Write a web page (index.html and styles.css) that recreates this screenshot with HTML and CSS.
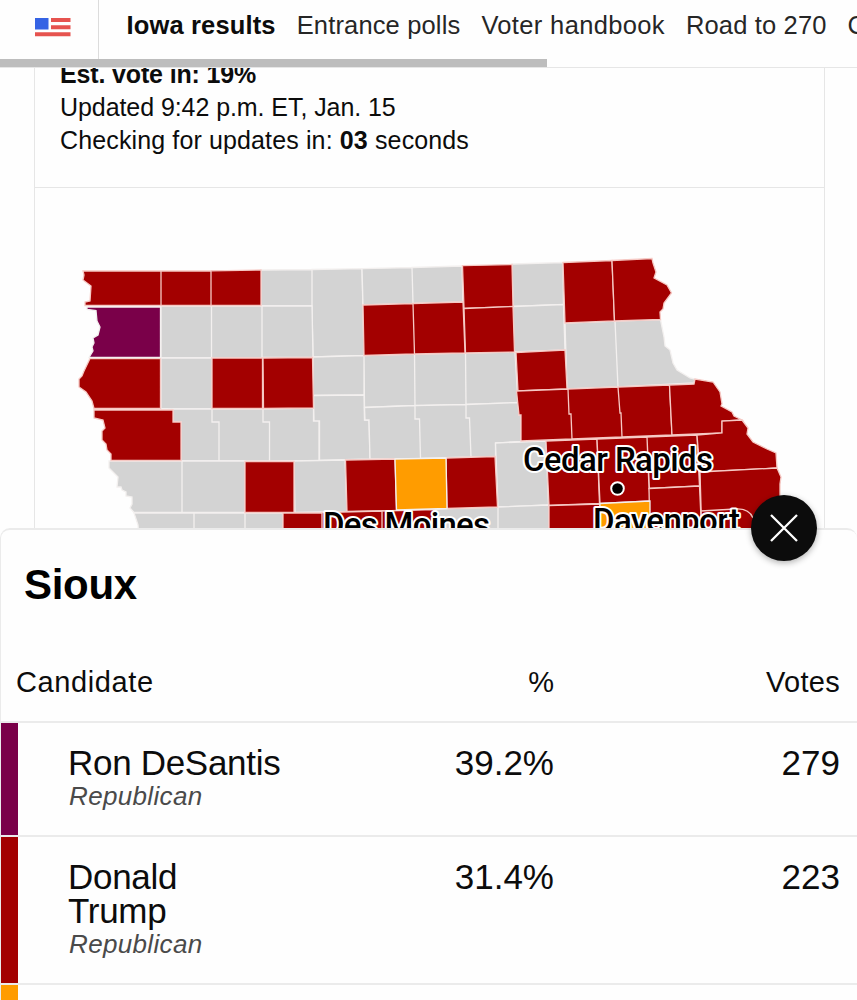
FILE: index.html
```
<!DOCTYPE html>
<html lang="en">
<head>
    <meta charset="utf-8">
    <title>Iowa results</title>
    <link rel="stylesheet" href="styles.css">
</head>
<body>
    <header class="topbar">
        <a class="flag" href="#">
            <svg width="36" height="19" viewBox="0 0 36 19">
                <rect width="13.5" height="11.5" fill="#3563e4"/>
                <path d="M16 0h19.5v4H16zM16 7.3h19.5v4H16zM0 14.3h35.5v4H0z" fill="#e6534f"/>
            </svg>
        </a>
        <nav class="nav">
            <a class="active" href="#">Iowa results</a>
            <a class="polls" href="#">Entrance polls</a>
            <a class="handbook" href="#">Voter handbook</a>
            <a class="road" href="#">Road to 270</a>
            <a href="#">C</a>
        </nav>
        <div class="scroll-thumb"></div>
    </header>

    <main class="card">
        <div class="status">
            <p class="est">Est. vote in: 19%</p>
            <p class="updated">Updated 9:42 p.m. ET, Jan. 15</p>
            <p class="checking">Checking for updates in: <b>03</b> seconds</p>
        </div>
        <svg class="map" width="789" height="340" viewBox="35 188 789 340">
            <!-- no results yet -->
            <g class="none">
                <path d="M261 270L312 269.5V306H261zM312 269.5L362 268.7L364 355.5L313 357L312 306z"/>
                <path d="M362 268.7L412 267.5L413 303.5L363 305zM412 267.5L462 266L463 302L413 303.5zM512 264L563 262.5L563.500 304.500L513 306.500z"/>
                <path d="M161 306H211.500V358H161zM211.500 306H262V358H211.500zM262 306H312L313 357.500H262zM513 306.500L563.500 304.500L565 350L514 352z"/>
                <path d="M565 323L615 321L618 387L567 389zM615 321L660.500 319.500L664 337L665 346L670 350L673 363L677 370L690 378L695 379L694 383L618 387z"/>
                <path d="M161 358H212V409H173L161 408.500zM313 357L364 355.500V395L313 395.500zM364 355.500L414.500 354L415 405.500L364.500 407.500zM414.500 354L465.500 353L466 404.500L415 406zM465.500 353L515 352L518 402.500L466 404.500z"/>
                <path d="M173 409H212V422H219V461H181V422H173zM212 409H263V422H269.500V461H219V422H212zM263 409L313.500 408V421H319V460.500L269.500 461V422H263zM313.500 395.500L364 395L364.500 420H369L370 459L319.500 460.500V421H314z"/>
                <path d="M364.500 407.500L415 405.500V419H419.500L420.500 458.500L370 459L369 420H365zM415 405.500L466 404.500V418H469.500L471 457L420.500 458.500L419.500 419H415zM466 404.500L518 402.500L519 415H521V441.500L495.500 443V456.500L471 457L469.500 418H466z"/>
                <path d="M109 461H182V512.500H134L130 508L132 504V497L126 496V492L122 490L121 487H117L118 477L109 468zM182 461H245V512.500H182zM294 461L345 460L347 511.500L295 512.500zM495.500 443L546 441L548.500 505L498 507z"/>
                <path d="M134 513H194V540H139L138 525zM194 513H245V540H194zM245 513H283V540H245zM434 509L498 507V540H434zM498 507L549 505V540H498z"/>
            </g>
            <g class="trump">
                <path d="M83 271H161V305.500H85V302L90 301L91 286L83 280L84 275zM161 271H211V305.500H161zM211 270.800L261 270V305.500H211z"/>
                <path d="M462.500 265.700L512 264.500L513 306.500L464 308.500zM563 262.500L612 260.500L614.500 321L565 323z"/>
                <path d="M612 260.500L652 258.500L653 263L656 272L654 278L667 285L671.500 293L664 303L663 309L660 312L660.500 319.500L614.500 321z"/>
                <path d="M363 305L413 303.500L414.500 354L364 355.500zM413 303.500L463 302L465 353L414.500 354zM464 308.500L513 306.500L514.500 352L465.500 353zM516 352.500L565 350L567 389L518 391z"/>
                <path d="M90 358.500H160.500V408.500H94L92 401L86 392L79 387V379L82 376L84 371zM212 358H262.500V408.500H212zM263 358L312.500 357.500L313.500 408L263.500 408.500z"/>
                <path d="M94 410H173V422H181V460.500H111V454L107 450L106 444L102 440V431L105 428L103 420L94 418z"/>
                <path d="M516.500 391L568 389L569 414H571L572 439L521 441V415H519zM568 389L618 387L620 413H621L622 437L572 439L571 414H569zM618 387L669.500 385L672 435L622 437L621 413H620z"/>
                <path d="M669.500 385L694 384L695 379L713 382L720 392L722 404L721 406L732 412L734 416L742 420L722 421V433L672 435z"/>
                <path d="M245 461.500H294V512.500H245zM345.500 460L395 459L396.500 510.500L347 511.500zM446 458L495 456.500L497.500 507L447 508.500zM546 441L597 439L599.500 503.500L549 505.500z"/>
                <path d="M597 439L647 437L650 501L600 503.500zM647 437L697 435L699.500 486L649 488.500z"/>
                <path d="M697 435L722 433V421L742 420L748 428L747 434L753 442L767 449L776 453L777 468L700 472z"/>
                <path d="M700 472L777 468L781 477L780 484V500L770 540H702zM649 488.500L699.500 486L702 540H650z"/>
                <path d="M283 513H322V540H283zM322 512.500L382 511V540H322zM382 511L434 509.500V540H382zM549 505.500L600 504V540H549z"/>
                <path class="line" d="M701 511L735 509Q749 508 753 518"/>
            </g>
            <g class="haley">
                <path d="M395 459L446 458L447 508.500L396.500 510zM600 503.500L650 501V540H600z"/>
            </g>
            <path class="desantis" d="M87 307H160.500V357.500H89L93 351L92 347L94 343L93 338L98 335L100 327L97 321L96 310.500L87 309.500z"/>
            <g class="cities">
                <circle cx="617.500" cy="488.500" r="5.300"/>
                <text x="523" y="471" textLength="190">Cedar Rapids</text>
                <text x="323" y="536" textLength="167">Des Moines</text>
                <text x="593" y="532" textLength="147">Davenport</text>
            </g>
        </svg>
    </main>

    <section class="sheet">
        <button class="close" aria-label="Close">
            <svg width="28" height="28" viewBox="0 0 28 28"><path d="M1 1L27 27M27 1L1 27"/></svg>
        </button>
        <h2>Sioux</h2>
        <div class="row head">
            <span class="candidate">Candidate</span>
            <span class="pct">%</span>
            <span class="votes">Votes</span>
        </div>
        <div class="row ron">
            <div class="candidate">
                <div class="name">Ron DeSantis</div>
                <div class="party">Republican</div>
            </div>
            <span class="pct">39.2%</span>
            <span class="votes">279</span>
        </div>
        <div class="row donald">
            <div class="candidate">
                <div class="name">Donald<br>Trump</div>
                <div class="party">Republican</div>
            </div>
            <span class="pct">31.4%</span>
            <span class="votes">223</span>
        </div>
        <div class="row nikki"></div>
    </section>
</body>
</html>
```
FILE: styles.css
```
* { box-sizing: border-box; }
body {
    margin: 0;
    height: 1000px;
    overflow: hidden;
    background: #fefefe;
    color: #0c0c0c;
    font-family: "Liberation Sans", Arial, sans-serif;
}
a { color: inherit; text-decoration: none; }
p, h2 { margin: 0; }

.topbar {
    position: relative;
    display: flex;
    height: 68px;
    border-bottom: 1px solid #e6e6e6;
    overflow: hidden;
}
.flag {
    flex: none;
    width: 99px;
    padding: 18px 0 0 35px;
    border-right: 1px solid #dcdcdc;
}
.flag svg { display: block; }
.nav {
    display: flex;
    gap: 21px;
    padding-left: 27.5px;
    font-size: 25.5px;
    line-height: 50px;
    letter-spacing: 0.15px;
    white-space: nowrap;
    color: #262626;
}
.nav .active { font-weight: bold; color: #0c0c0c; }
.nav .handbook { letter-spacing: 0.35px; }
.scroll-thumb {
    position: absolute;
    left: 0;
    bottom: 0;
    width: 547px;
    height: 8px;
    background: #bdbdbd;
}

.card {
    height: 460px;
    margin: 0 32px 0 34px;
    border: 1px solid #e6e6e6;
    border-width: 0 1px;
    overflow: hidden;
}
.status {
    display: flow-root;
    height: 120px;
    padding-left: 25px;
    border-bottom: 1px solid #e6e6e6;
    font-size: 25px;
    line-height: 33.4px;
}
.est { margin-top: -10.5px; font-weight: bold; letter-spacing: -0.15px; }
.updated { letter-spacing: -0.07px; }
.checking { letter-spacing: 0.13px; }

.map { display: block; }
.map path { stroke: #f3f0ef; stroke-width: 1.3; }
.none { fill: #d3d3d3; }
.trump { fill: #a30000; }
.trump path { stroke: #f6c9c4; }
.trump .line { fill: none; }
.haley { fill: #ff9c00; }
.desantis { fill: #7a0049; }
.cities {
    font-family: Roboto, sans-serif;
    font-size: 33px;
    font-weight: 500;
    fill: #000;
    stroke: #fff;
    stroke-width: 4px;
    stroke-linejoin: round;
    paint-order: stroke;
}

.sheet {
    position: relative;
    height: 472px;
    border: 2px solid #ebebeb;
    border-width: 2px 0 0 1px;
    border-radius: 10px 10px 0 0;
    background: #fefefe;
}
.close {
    position: absolute;
    top: -35px;
    right: 40px;
    display: flex;
    align-items: center;
    justify-content: center;
    width: 66px;
    height: 66px;
    padding: 0;
    border: 0;
    border-radius: 50%;
    background: #0c0c0c;
    box-shadow: 0 2px 6px rgba(0,0,0,0.3);
}
.close path { stroke: #fff; stroke-width: 2.3; }
h2 {
    height: 112px;
    padding: 32px 0 0 23px;
    font-size: 42px;
    line-height: 46px;
    letter-spacing: -0.3px;
    color: #000;
}
.row {
    display: flex;
    height: 114px;
    padding: 23px 17px 0 67px;
    border-top: 2px solid #ebebeb;
    font-size: 35px;
    line-height: 34px;
}
.candidate { width: 299px; }
.name { letter-spacing: -0.3px; }
.pct { width: 187px; text-align: right; }
.votes { flex: 1; text-align: right; }
.row.head {
    height: 79px;
    padding: 23px 17px 0 15px;
    border: 0;
    font-size: 29px;
}
.head .candidate { width: 351px; letter-spacing: 0.6px; }
.head .votes { letter-spacing: 0.3px; }
.party {
    padding-left: 1px;
    font-size: 26px;
    line-height: 33px;
    font-style: italic;
    letter-spacing: 0.35px;
    color: #4a4a4a;
}

/* candidate colour stripe */
.ron { box-shadow: inset 17px 0 #7a0049; }
.row.donald { height: 148px; box-shadow: inset 17px 0 #a30000; }
.row.nikki { height: 17px; padding: 0; box-shadow: inset 17px 0 #ff9c00; }
```
